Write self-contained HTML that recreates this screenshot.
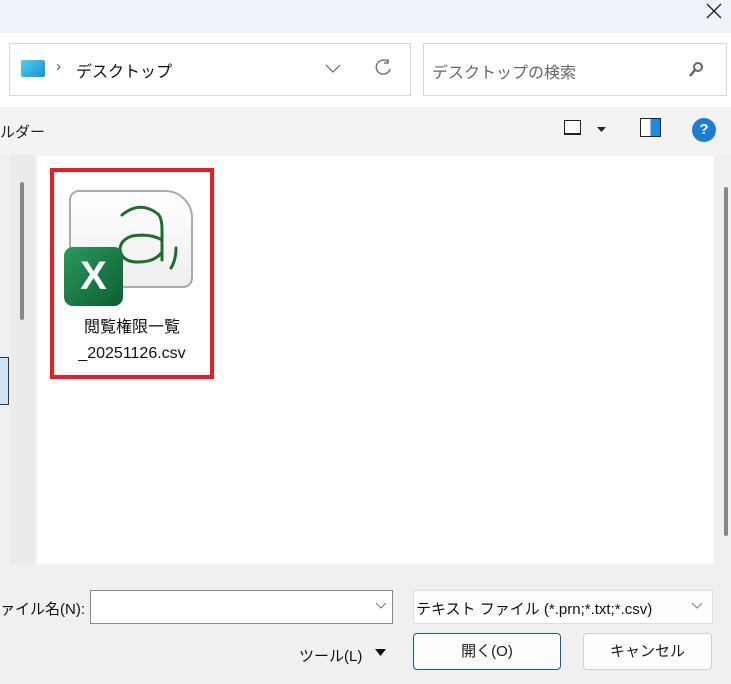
<!DOCTYPE html>
<html><head><meta charset="utf-8"><style>
*{margin:0;padding:0;box-sizing:border-box}
body{width:731px;height:684px;overflow:hidden;background:#f0f0f0;position:relative;font-family:"Liberation Sans","Noto Sans CJK JP",sans-serif;color:#1a1a1a}
.a{position:absolute}
</style></head><body>
<div class="a" style="left:0;top:0;width:731px;height:33px;background:#eef2f9"></div>
<svg class="a" style="left:706px;top:3px" width="16" height="16"><path d="M1 1L15 15M15 1L1 15" stroke="#222" stroke-width="1.3"/></svg>
<div class="a" style="left:0;top:33px;width:731px;height:74px;background:#fff"></div>
<div class="a" style="left:9px;top:43px;width:402px;height:53px;border:1px solid #d6d6d6;background:#fff"></div>
<div class="a" style="left:21px;top:60px;width:24px;height:17px;background:linear-gradient(135deg,#4fd0f0,#1a8fd6);border-radius:2px"></div>
<div class="a" style="left:56px;top:58px;font-size:15px;color:#555">›</div>
<div class="a" style="left:76px;top:58px;font-size:16px;color:#111">デスクトップ</div>
<svg class="a" style="left:325px;top:64px" width="16" height="10"><path d="M1 1L8 8L15 1" stroke="#666" fill="none" stroke-width="1.2"/></svg>
<svg class="a" style="left:374px;top:58px" width="18" height="20"><path d="M14 4A7 7 0 1 0 16 11" stroke="#777" fill="none" stroke-width="1.5"/><path d="M14 1V5H10" stroke="#777" fill="none" stroke-width="1.5"/></svg>
<div class="a" style="left:423px;top:43px;width:304px;height:53px;border:1px solid #d6d6d6;background:#fff"></div>
<div class="a" style="left:432px;top:59px;font-size:16px;color:#666">デスクトップの検索</div>
<svg class="a" style="left:687px;top:61px" width="18" height="18"><circle cx="11" cy="6" r="4" stroke="#666" stroke-width="2" fill="none"/><path d="M8 9L3 15" stroke="#666" stroke-width="2.5"/></svg>
<div class="a" style="left:0;top:107px;width:731px;height:48px;background:#f3f3f3"></div>
<div class="a" style="left:0;top:121px;font-size:15px;color:#222">ルダー</div>
<div class="a" style="left:564px;top:120px;width:17px;height:15px;border:1px solid #222;border-bottom-width:2px;background:#fff"></div>
<svg class="a" style="left:597px;top:127px" width="9" height="6"><path d="M0 0H9L4.5 5Z" fill="#223"/></svg>
<div class="a" style="left:640px;top:118px;width:21px;height:19px;border:1px solid #222;background:linear-gradient(90deg,#fff 50%,#1f8be0 50%)"></div>
<div class="a" style="left:692px;top:118px;width:24px;height:24px;border-radius:50%;background:#1a7fd4;color:#fff;font-size:15px;font-weight:bold;text-align:center;line-height:24px">?</div>
<div class="a" style="left:10px;top:155px;width:25px;height:410px;background:#ebebeb"></div>
<div class="a" style="left:20px;top:182px;width:4px;height:138px;background:#888;border-radius:2px"></div>
<div class="a" style="left:0;top:357px;width:9px;height:48px;background:#cce4f7;border:1px solid #333;border-left:none"></div>
<div class="a" style="left:37px;top:156px;width:677px;height:408px;background:#fff"></div>
<div class="a" style="left:724px;top:187px;width:4px;height:349px;background:#888;border-radius:2px"></div>
<div class="a" style="left:50px;top:168px;width:164px;height:211px;border:4px solid #ed1c24"></div>
<div class="a" style="left:69px;top:190px;width:124px;height:98px;border:2px solid #aaa;border-radius:10px 28px 10px 10px;background:linear-gradient(#fff,#eee)"></div>
<svg class="a" style="left:110px;top:200px" width="70" height="70"><g stroke="#1d6e2a" stroke-width="3" fill="none" stroke-linecap="round"><path d="M12 15Q30 0 48 14Q52 18 52 30V60"/><path d="M52 40Q40 33 22 36Q10 40 10 50Q12 62 28 62Q45 62 52 52"/><path d="M66 48Q66 60 61 68"/></g></svg>
<div class="a" style="left:64px;top:247px;width:59px;height:59px;border-radius:9px;background:linear-gradient(135deg,#2a9a5a,#0d5d31);color:#fff;font-size:40px;font-weight:bold;text-align:center;line-height:59px">X</div>
<div class="a" style="left:54px;top:315px;width:156px;text-align:center;font-size:16px;line-height:26px;color:#111">閲覧権限一覧<br>_20251126.csv</div>
<div class="a" style="left:0;top:598px;font-size:15px;color:#111">ァイル名(N):</div>
<div class="a" style="left:90px;top:590px;width:303px;height:34px;border:1px solid #888;background:#fff"></div>
<svg class="a" style="left:376px;top:603px" width="10" height="6"><path d="M0 0L5 5L10 0" stroke="#777" fill="none"/></svg>
<div class="a" style="left:413px;top:590px;width:300px;height:34px;border:1px solid #ddd;background:#fdfdfd"></div>
<div class="a" style="left:416px;top:598px;font-size:15px;color:#111">テキスト ファイル (*.prn;*.txt;*.csv)</div>
<svg class="a" style="left:692px;top:603px" width="10" height="6"><path d="M0 0L5 5L10 0" stroke="#777" fill="none"/></svg>
<div class="a" style="left:299px;top:645px;font-size:15px;color:#111">ツール(L)</div>
<svg class="a" style="left:375px;top:649px" width="11" height="7"><path d="M0 0H11L5.5 7Z" fill="#111"/></svg>
<div class="a" style="left:413px;top:633px;width:148px;height:37px;border:1px solid #0a5fb4;border-radius:4px;background:#fdfdfd;text-align:center;line-height:35px;font-size:15px">開く(O)</div>
<div class="a" style="left:583px;top:633px;width:129px;height:37px;border:1px solid #d0d0d0;border-radius:4px;background:#fdfdfd;text-align:center;line-height:35px;font-size:15px">キャンセル</div>
</body></html>
